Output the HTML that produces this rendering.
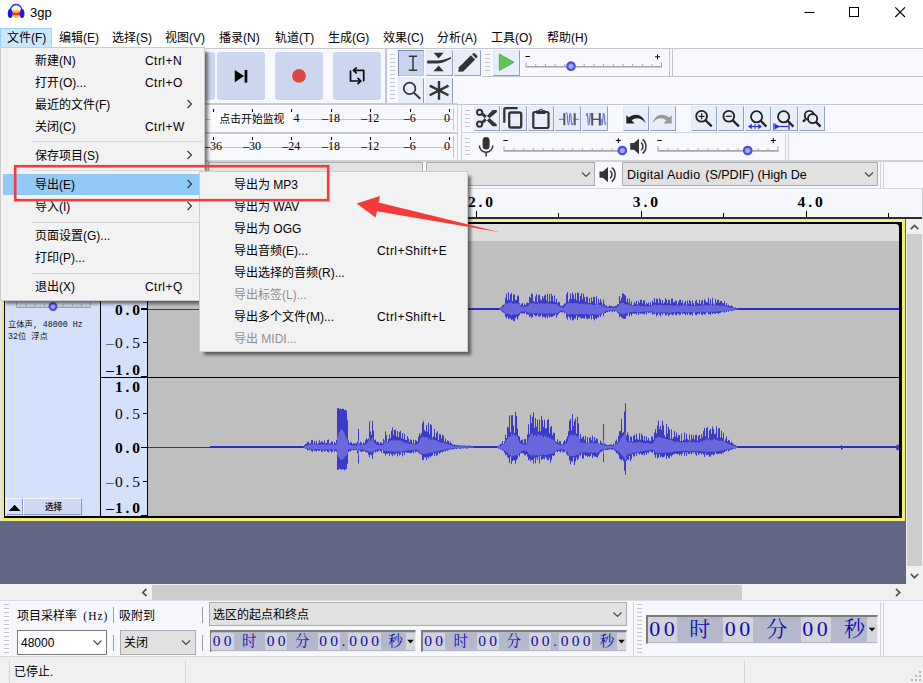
<!DOCTYPE html>
<html lang="zh">
<head>
<meta charset="utf-8">
<title>3gp</title>
<style>
*{box-sizing:border-box;margin:0;padding:0}
html,body{width:923px;height:683px;overflow:hidden;background:#f8f9fe}
body{position:relative;font-family:"Liberation Sans","Noto Sans CJK SC",sans-serif;font-size:12px;color:#000}
#root{position:absolute;left:0;top:0;width:923px;height:683px;overflow:hidden}
#root div,#root span,#root svg{position:absolute}
.t{white-space:nowrap;line-height:1}
.sim{font-family:"Liberation Serif","Noto Serif CJK SC",serif}
.mono{font-family:"Liberation Mono","Noto Sans CJK SC",monospace}
#title{left:0;top:0;width:923px;height:27px;background:#fff}
#menubar{left:0;top:27px;width:923px;height:21px;background:#fff}
#menubar .t{top:5px;font-size:12px}
#tb{left:0;top:48px;width:923px;height:141px;background:#f8f9fe}
.tbtn{background:#ccd6ee;border-radius:3px}
.sbtn{background:#e9eefb;border:1px solid;border-color:#e3e8f7 #939ec2 #939ec2 #e3e8f7}
.sbtn.sel{background:#c7d3ef;border-color:#7d8ab3 #b9c5e6 #b9c5e6 #7d8ab3}
.combo{background:#e1e1e1;border:1px solid #adadad}
.grip{width:5px;background:repeating-linear-gradient(to bottom,#c6c6ca 0,#c6c6ca 1px,transparent 1px,transparent 4px)}
.vsep{width:1px;background:#d0d1d9}
.hsep{height:1px;background:#d4d6e0}
.menu{background:#f2f2f2;border:1px solid #cccccc;box-shadow:4px 4px 3px -1px rgba(0,0,0,.5)}
.menu .t{font-size:12px}
.sepl{height:1px;background:#d7d7d7}
.dis{color:#8f8f8f}
i.c8{font-style:normal;display:inline-block;position:static !important;width:8.7px;text-align:center}
.ml{font-size:12px;letter-spacing:0}
.mi{font-size:12px}
.tc{color:#0c0cb4;text-align:center;font-weight:400}
.vr{font-size:15.5px}
i.dot{font-style:normal;display:inline-block;position:static !important;width:8px;text-align:left}
</style>
</head>
<body>
<div id="root">
<div id="title">
<svg style="left:6px;top:2px" width="20" height="18" viewBox="6 2 20 18">
<defs><linearGradient id="lg1" x1="0" y1="0" x2="0" y2="1"><stop offset="0" stop-color="#fff0b0"/><stop offset="0.25" stop-color="#ffd040"/><stop offset="0.42" stop-color="#ff8a20"/><stop offset="0.5" stop-color="#ff2410"/><stop offset="0.62" stop-color="#ff3a10"/><stop offset="0.72" stop-color="#ffa030"/><stop offset="1" stop-color="#ffe070"/></linearGradient></defs>
<ellipse cx="16.1" cy="13.4" rx="3.9" ry="4.7" fill="url(#lg1)"/>
<path d="M10 11.8 A6.1 7.3 0 0 1 22.2 11.8" fill="none" stroke="#2a2aee" stroke-width="1.3"/>
<ellipse cx="10.2" cy="13.6" rx="2.4" ry="4.5" fill="#1c1ce6"/>
<ellipse cx="22" cy="13.6" rx="2.4" ry="4.5" fill="#1c1ce6"/>
</svg>
<span class="t" style="left:30px;top:6px;font-size:13px">3gp</span>
<svg style="left:800px;top:0" width="123" height="27" viewBox="0 0 123 27">
<path d="M4.5 12.5 H14.5" stroke="#000" stroke-width="1"/>
<rect x="49.5" y="7.5" width="9" height="9" fill="none" stroke="#000" stroke-width="1"/>
<path d="M95.3 7.3 L105 17 M105 7.3 L95.3 17" stroke="#000" stroke-width="1.1"/>
</svg>
</div>
<div id="menubar">
<div style="left:0;top:1px;width:52px;height:20px;background:#cce8ff;border:1px solid #99d1ff"></div>
<span class="t" style="left:7px">文件(F)</span>
<span class="t" style="left:59px">编辑(E)</span>
<span class="t" style="left:112px">选择(S)</span>
<span class="t" style="left:165px">视图(V)</span>
<span class="t" style="left:219px">播录(N)</span>
<span class="t" style="left:275px">轨道(T)</span>
<span class="t" style="left:328px">生成(G)</span>
<span class="t" style="left:383px">效果(C)</span>
<span class="t" style="left:437px">分析(A)</span>
<span class="t" style="left:491px">工具(O)</span>
<span class="t" style="left:547px">帮助(H)</span>
</div>
<div id="tb">
<div style="left:0;top:0;width:923px;height:1px;background:#c6c6cb"></div>
<div class="tbtn" style="left:159px;top:4px;width:56px;height:48px"></div>
<div class="tbtn" style="left:217px;top:4px;width:48px;height:48px"></div>
<div class="tbtn" style="left:275px;top:4px;width:48px;height:48px"></div>
<div class="tbtn" style="left:333px;top:4px;width:48px;height:48px"></div>
<div style="left:385px;top:1px;width:2px;height:55px;background:#c4c5cc"></div>
<div class="grip" style="left:390px;top:6px;height:46px;width:5px"></div>
<div class="sbtn sel" style="left:398px;top:2px;width:26px;height:26px"></div>
<div class="sbtn" style="left:426px;top:2px;width:27px;height:26px"></div>
<div class="sbtn" style="left:454px;top:2px;width:27px;height:26px"></div>
<div class="sbtn" style="left:398px;top:30px;width:26px;height:26px"></div>
<div class="sbtn" style="left:426px;top:30px;width:27px;height:26px"></div>
<div class="grip" style="left:485px;top:6px;height:18px;width:5px"></div>
<div class="sbtn" style="left:493px;top:2px;width:27px;height:26px"></div>
<div style="left:482px;top:28px;width:441px;height:1px;background:#c4c5cb"></div>
<div class="vsep" style="left:669px;top:1px;height:27px;background:#c4c5cb"></div>
<div class="vsep" style="left:672px;top:1px;height:27px;background:#c4c5cb"></div>
<div style="left:0;top:55px;width:457px;height:2px;background:#c9cad2"></div>
<div style="left:457px;top:56px;width:466px;height:1px;background:#c4c5cb"></div>
<div style="left:0;top:71px;width:454px;height:1px;background:#c4c4c8"></div>
<div style="left:0;top:99px;width:454px;height:1px;background:#c4c4c8"></div>
<div style="left:0;top:84px;width:457px;height:2px;background:#c9cad2"></div>
<div class="vsep" style="left:453px;top:60px;height:22px;background:#c4c4c8"></div>
<div class="vsep" style="left:453px;top:88px;height:22px;background:#c4c4c8"></div>
<div class="vsep" style="left:457px;top:57px;height:56px"></div>
<div class="vsep" style="left:461px;top:57px;height:56px"></div>
<div style="left:461px;top:84px;width:462px;height:1px;background:#d3d4dc"></div>
<div style="left:0;top:112px;width:923px;height:2px;background:#d0d1d9"></div>
<div style="left:213.0px;top:61px;width:1px;height:3px;background:#000"></div>
<div style="left:252.1px;top:61px;width:1px;height:3px;background:#000"></div>
<div style="left:291.3px;top:61px;width:1px;height:3px;background:#000"></div>
<div style="left:331.0px;top:61px;width:1px;height:3px;background:#000"></div>
<span class="t sim ml" style="left:322.0px;top:63.8px">–18</span>
<div style="left:370.3px;top:61px;width:1px;height:3px;background:#000"></div>
<span class="t sim ml" style="left:361.3px;top:63.8px">–12</span>
<div style="left:409.7px;top:61px;width:1px;height:3px;background:#000"></div>
<span class="t sim ml" style="left:403.7px;top:63.8px">–6</span>
<div style="left:449.0px;top:61px;width:1px;height:3px;background:#000"></div>
<span class="t sim ml" style="left:443.9px;top:63.8px">0</span>
<div style="left:213.0px;top:89px;width:1px;height:3px;background:#000"></div>
<span class="t sim ml" style="left:204.0px;top:91.69999999999999px">–36</span>
<div style="left:252.1px;top:89px;width:1px;height:3px;background:#000"></div>
<span class="t sim ml" style="left:243.1px;top:91.69999999999999px">–30</span>
<div style="left:291.3px;top:89px;width:1px;height:3px;background:#000"></div>
<span class="t sim ml" style="left:282.3px;top:91.69999999999999px">–24</span>
<div style="left:331.0px;top:89px;width:1px;height:3px;background:#000"></div>
<span class="t sim ml" style="left:322.0px;top:91.69999999999999px">–18</span>
<div style="left:370.3px;top:89px;width:1px;height:3px;background:#000"></div>
<span class="t sim ml" style="left:361.3px;top:91.69999999999999px">–12</span>
<div style="left:409.7px;top:89px;width:1px;height:3px;background:#000"></div>
<span class="t sim ml" style="left:403.7px;top:91.69999999999999px">–6</span>
<div style="left:449.0px;top:89px;width:1px;height:3px;background:#000"></div>
<span class="t sim ml" style="left:443.9px;top:91.69999999999999px">0</span>
<div style="left:211px;top:65px;width:81px;height:13px;background:#fcfdff"></div>
<span class="t" style="left:219.5px;top:66px;font-size:10.8px;font-weight:400;color:#000;font-family:'Liberation Serif','Noto Sans CJK SC',sans-serif">点击开始监视</span>
<span class="t sim ml" style="left:293.6px;top:63.8px">4</span>
<div class="grip" style="left:465px;top:62px;height:18px;width:5px"></div>
<div class="grip" style="left:465px;top:90px;height:18px;width:5px"></div>
<div class="sbtn" style="left:473.5px;top:58px;width:26px;height:25px"></div>
<div class="sbtn" style="left:500.5px;top:58px;width:26px;height:25px"></div>
<div class="sbtn" style="left:527.5px;top:58px;width:26px;height:25px"></div>
<div class="sbtn" style="left:554.5px;top:58px;width:26px;height:25px"></div>
<div class="sbtn" style="left:581.5px;top:58px;width:26px;height:25px"></div>
<div class="sbtn" style="left:622.5px;top:58px;width:26px;height:25px"></div>
<div class="sbtn" style="left:649.5px;top:58px;width:26px;height:25px"></div>
<div class="sbtn" style="left:690.5px;top:58px;width:26px;height:25px"></div>
<div class="sbtn" style="left:717.5px;top:58px;width:26px;height:25px"></div>
<div class="sbtn" style="left:744.5px;top:58px;width:26px;height:25px"></div>
<div class="sbtn" style="left:771.5px;top:58px;width:26px;height:25px"></div>
<div class="sbtn" style="left:798.5px;top:58px;width:26px;height:25px"></div>
<div class="vsep" style="left:785px;top:86px;height:26px"></div>
<div class="vsep" style="left:788px;top:86px;height:26px"></div>
<div class="combo" style="left:208px;top:114px;width:215px;height:24px"></div>
<div class="combo" style="left:426px;top:114px;width:169px;height:24px"></div>
<div class="combo" style="left:622px;top:114px;width:256px;height:24px"></div>
<span class="t" style="left:627px;top:120.6px;font-size:12.5px;letter-spacing:.3px">Digital Audio <span style="position:absolute;left:78.3px;top:0;letter-spacing:0">(S/PDIF) (High De</span></span>
<div class="vsep" style="left:880px;top:114px;height:26px"></div>
<div class="vsep" style="left:883px;top:114px;height:26px"></div>
</div>
<svg style="left:0;top:48px" width="923" height="141" viewBox="0 48 923 141">
<!-- skip end -->
<path d="M234.8 70 L244 76.1 L234.8 82.2Z" fill="#000"/><rect x="244.6" y="70" width="2.7" height="12.6" fill="#000"/>
<!-- record -->
<circle cx="299" cy="75.9" r="6.9" fill="#e04646"/>
<!-- loop -->
<g fill="none" stroke="#0a0a0a" stroke-width="1.7" stroke-linejoin="round" stroke-linecap="round">
<path d="M353.6 70.3 H363.7 V80.6"/><path d="M356.2 67.8 L353.5 70.3 L356.2 72.9"/>
<path d="M350.5 71.2 V81 H360.6"/><path d="M358 78.4 L360.8 81 L358 83.7"/>
</g>
<!-- I-beam -->
<path d="M408.8 56.2 H417.2 M408.8 70.3 H417.2 M413 56.2 V70.3" stroke="#3a3a3a" stroke-width="1.5" fill="none"/>
<!-- envelope -->
<path d="M433.5 52.8 H443.7 L438.6 58.6Z M433.5 71.3 H443.7 L438.6 65.6Z" fill="#333"/>
<path d="M427.2 60.6 H437 C442 60.2 446 59.2 451 57 L451 58.8 C447 61 443 63.2 437.5 63.6 H427.2Z" fill="#333"/>
<!-- pencil -->
<path d="M458.3 71.8 L458.9 67.2 L471 55.2 L475.2 59.4 L463.2 71.4 Z" fill="#333"/>
<path d="M472 54.3 L473 53.4 A1.5 1.5 0 0 1 475 53.4 L477 55.4 A1.5 1.5 0 0 1 477 57.4 L476.1 58.4Z" fill="#333"/>
<!-- magnifier -->
<circle cx="409.6" cy="88.4" r="5.8" fill="none" stroke="#333" stroke-width="1.7"/><path d="M413.8 92.6 L420.3 98.8" stroke="#333" stroke-width="2"/>
<!-- asterisk -->
<path d="M439 81 V99.7 M429.7 85.6 L448.5 95.3 M448.5 85.6 L429.7 95.3" stroke="#333" stroke-width="2.4" fill="none"/>
<!-- play at speed -->
<path d="M499.3 54 L514 62.3 L499.3 70.5Z" fill="#5ec556" stroke="#46a442" stroke-width="0.8"/>
<!-- speed slider -->
<g>
<path d="M525.5 66.7 H662" stroke="#a6a6a6" stroke-width="1.6"/>
<path d="M526 66 V62.5 M535.7 66 V64 M545.4 66 V64 M555.1 66 V64 M564.8 66 V64 M574.5 66 V64 M584.2 66 V64 M593.9 66 V64 M603.6 66 V64 M613.3 66 V64 M623 66 V64 M632.7 66 V64 M642.4 66 V64 M652.1 66 V64 M661.5 66 V62.5" stroke="#a6a6a6" stroke-width="1"/>
<path d="M525.5 56.5 H530" stroke="#000" stroke-width="1"/><path d="M655 56.8 H660 M657.5 54.3 V59.3" stroke="#000" stroke-width="1"/>
<circle cx="571" cy="66.2" r="3.7" fill="#a5a7ee" stroke="#4c50e0" stroke-width="2.3"/>
</g>
<!-- scissors -->
<g fill="none" stroke="#333" stroke-width="2">
<circle cx="479.6" cy="112.3" r="2.6"/><circle cx="479.6" cy="124.1" r="2.6"/>
</g>
<path d="M481 114.4 L483.2 112.8 L496.9 124.4 L496.7 126.3 L492.6 126.3Z M481 122 L483.2 123.6 L496.9 112 L496.7 110.1 L492.6 110.1Z" fill="#333"/>
<!-- copy -->
<g fill="none" stroke="#333" stroke-width="2.3" stroke-linejoin="round">
<rect x="509.2" y="112.5" width="12" height="15" rx="1.6"/>
<path d="M504.3 122.8 V109.8 A1.6 1.6 0 0 1 505.9 108.2 H517.6"/>
</g>
<!-- paste -->
<g fill="none" stroke="#333" stroke-width="2.2" stroke-linejoin="round">
<rect x="533.3" y="112" width="15.2" height="16" rx="1.4"/>
</g>
<path d="M536.4 114 V110.2 H538.9 A2.1 2.1 0 0 1 542.9 110.2 H545.4 V114Z" fill="#333"/>
<circle cx="540.9" cy="110.2" r="0.8" fill="#e9eefb"/>
<!-- trim -->
<g fill="none">
<path d="M559 119.3 H563.5 M573.5 119.3 H578.8" stroke="#5a62e8" stroke-width="1"/>
<path d="M565.6 113.5 C566.4 112 567 112 567.4 116 L567.8 122.5 C568.2 126 568.8 126 569.2 122.5 L569.6 116 C570 112 570.6 112 571 116 L571.4 122.5 C571.8 126 572.4 126 572.8 122.5" stroke="#5a62e8" stroke-width="1"/>
<path d="M564.3 113.2 V125.2 M574.7 113.2 V125.2" stroke="#555" stroke-width="2"/>
</g>
<!-- silence -->
<g fill="none">
<path d="M586.3 116 C586.7 112 587.3 112 587.7 116 L588.1 122.5 C588.5 126 589.1 126 589.5 122.5 L589.9 116 C590.3 112 590.9 112 591.3 116 L591.5 119" stroke="#5a62e8" stroke-width="1"/>
<path d="M601 119 L601.2 122.5 C601.6 126 602.2 126 602.6 122.5 L603 116 C603.4 112 604 112 604.4 116 L604.8 122.5 C605.2 126 605.6 125 605.9 122.5" stroke="#5a62e8" stroke-width="1"/>
<path d="M592.6 119.3 H600" stroke="#444" stroke-width="1.2"/>
<path d="M592.2 113 V125.6 M599.8 113 V125.6" stroke="#555" stroke-width="2"/>
</g>
<!-- undo -->
<path d="M626.3 115.2 L626.3 123.4 L634.6 123.4 L631.6 120.3 C636 116.6 641.5 117.8 645.6 123.2 C643.5 114.8 635 112 628.8 117.6 Z" fill="#222"/>
<!-- redo -->
<path d="M671.7 115.2 L671.7 123.4 L663.4 123.4 L666.4 120.3 C662 116.6 656.5 117.8 652.4 123.2 C654.5 114.8 663 112 669.2 117.6 Z" fill="#999"/>
<!-- zoom in/out/sel/fit/toggle -->
<g fill="none" stroke="#222" stroke-width="1.8">
<circle cx="701.6" cy="116.3" r="5.4"/><path d="M705.5 120.2 L711.7 126.4" stroke-width="2.3"/><path d="M698.6 116.3 H704.6 M701.6 113.3 V119.3" stroke-width="1.3"/>
<circle cx="728.8" cy="116.3" r="5.4"/><path d="M732.7 120.2 L738.9 126.4" stroke-width="2.3"/><path d="M725.8 116.3 H731.8" stroke-width="1.3"/>
<circle cx="756.6" cy="116.8" r="5.6"/><path d="M760.6 120.8 L766.4 126.6" stroke-width="2.3"/>
<circle cx="783.6" cy="116.8" r="5.6"/><path d="M787.6 120.8 L793.4 126.6" stroke-width="2.3"/>
<circle cx="809.4" cy="115.4" r="4.6"/><circle cx="812.6" cy="118.6" r="4.6" fill="#e9eefb"/><path d="M815.9 121.9 L820.6 126.6" stroke-width="2.3"/><path d="M805.4 119.4 L803 121.8" stroke-width="2.3"/>
</g>
<g stroke="#2a32d8" fill="#2a32d8" stroke-width="1">
<path d="M749 126.5 H761" fill="none" stroke-width="1.2"/><path d="M748 126.5 L751.8 123.8 V129.2Z M762 126.5 L758.2 123.8 V129.2Z" stroke="none"/><path d="M755 124 V129" stroke-width="1"/>
<path d="M774.5 126.5 H788.5" fill="none" stroke-width="1.2"/><path d="M774 123.3 V129.7 M789 123.3 V129.7" stroke-width="1.3"/><path d="M775 123.8 L780 126.5 L775 129.2Z" stroke="none"/>
</g>
<!-- mic -->
<rect x="482.6" y="137" width="7" height="12.4" rx="3.5" fill="#333"/>
<path d="M479.4 145.6 A6.7 6.7 0 0 0 492.8 145.6" fill="none" stroke="#333" stroke-width="1.5"/><path d="M486.1 152.2 V156.6" stroke="#333" stroke-width="1.5"/>
<!-- rec slider -->
<g>
<path d="M503.5 150.9 H622" stroke="#a6a6a6" stroke-width="1.6"/>
<path d="M504 150 V146.3 M513.8 150 V148.3 M523.6 150 V148.3 M533.4 150 V148.3 M543.2 150 V148.3 M553 150 V148.3 M562.8 150 V148.3 M572.6 150 V148.3 M582.4 150 V148.3 M592.2 150 V148.3 M602 150 V148.3 M611.8 150 V148.3 M621.6 150 V146.3" stroke="#a6a6a6" stroke-width="1"/>
<path d="M503.4 140.5 H507.8" stroke="#000" stroke-width="1"/><path d="M615.8 140.5 H620.8 M618.3 138 V143" stroke="#000" stroke-width="1"/>
<circle cx="622.3" cy="150.5" r="3.7" fill="#a5a7ee" stroke="#4c50e0" stroke-width="2.3"/>
</g>
<!-- speaker (mixer) -->
<path d="M630.2 143 H634 L639 138.6 V154.2 L634 149.8 H630.2Z" fill="#333"/>
<path d="M641.2 142.6 A5 5 0 0 1 641.2 150.2 M642.6 139.4 A9 9 0 0 1 642.6 153.4" fill="none" stroke="#333" stroke-width="1.5"/>
<!-- play slider -->
<g>
<path d="M657.5 150.9 H778.5" stroke="#a6a6a6" stroke-width="1.6"/>
<path d="M658 150 V146.3 M668 150 V148.3 M678 150 V148.3 M688 150 V148.3 M698 150 V148.3 M708 150 V148.3 M718 150 V148.3 M728 150 V148.3 M738 150 V148.3 M748 150 V148.3 M758 150 V148.3 M768 150 V148.3 M778 150 V146.3" stroke="#a6a6a6" stroke-width="1"/>
<path d="M657.4 140.5 H661.8" stroke="#000" stroke-width="1"/><path d="M770.8 140.5 H775.8 M773.3 138 V143" stroke="#000" stroke-width="1"/>
<circle cx="747.7" cy="150.5" r="3.7" fill="#a5a7ee" stroke="#4c50e0" stroke-width="2.3"/>
</g>
<!-- device toolbar chevrons + speaker -->
<g fill="none" stroke="#444" stroke-width="1.1">
<path d="M582 172.5 L586 176.5 L590 172.5"/><path d="M865 172.5 L869 176.5 L873 172.5"/>
</g>
<path d="M599.5 171.5 H603 L608 167 V182.2 L603 177.7 H599.5Z" fill="#333"/>
<path d="M610.2 170.8 A5 5 0 0 1 610.2 178.4 M611.8 167.6 A9 9 0 0 1 611.8 181.6" fill="none" stroke="#333" stroke-width="1.5"/>
</svg>
<div style="left:0;top:189px;width:923px;height:28px;background:#f7f8fe"></div>
<div style="left:0;top:188px;width:923px;height:1px;background:#d8d9e0"></div>
<div style="left:922px;top:189px;width:1px;height:28px;background:#c9cad2"></div>
<div style="left:146.4px;top:211px;width:1px;height:6px;background:#000"></div>
<span class="t sim" style="left:137.9px;top:194px;font-size:15.5px;font-weight:bold"><i class="c8">0</i><i class="c8">.</i><i class="c8">0</i></span>
<div style="left:228.8px;top:213px;width:1px;height:4px;background:#000"></div>
<div style="left:311.2px;top:211px;width:1px;height:6px;background:#000"></div>
<span class="t sim" style="left:302.7px;top:194px;font-size:15.5px;font-weight:bold"><i class="c8">1</i><i class="c8">.</i><i class="c8">0</i></span>
<div style="left:393.6px;top:213px;width:1px;height:4px;background:#000"></div>
<div style="left:476.0px;top:211px;width:1px;height:6px;background:#000"></div>
<span class="t sim" style="left:467.5px;top:194px;font-size:15.5px;font-weight:bold"><i class="c8">2</i><i class="c8">.</i><i class="c8">0</i></span>
<div style="left:558.4px;top:213px;width:1px;height:4px;background:#000"></div>
<div style="left:640.8px;top:211px;width:1px;height:6px;background:#000"></div>
<span class="t sim" style="left:632.3px;top:194px;font-size:15.5px;font-weight:bold"><i class="c8">3</i><i class="c8">.</i><i class="c8">0</i></span>
<div style="left:723.2px;top:213px;width:1px;height:4px;background:#000"></div>
<div style="left:805.6px;top:211px;width:1px;height:6px;background:#000"></div>
<span class="t sim" style="left:797.1px;top:194px;font-size:15.5px;font-weight:bold"><i class="c8">4</i><i class="c8">.</i><i class="c8">0</i></span>
<div style="left:888.0px;top:213px;width:1px;height:4px;background:#000"></div>
<div style="left:0;top:217px;width:906px;height:2px;background:#111"></div>
<div style="left:0;top:217px;width:906px;height:304px;background:#f3ee78"></div>
<div style="left:0;top:217px;width:1px;height:304px;background:#e8e8e8"></div>
<div style="left:905px;top:219px;width:1px;height:302px;background:#5a5f8c"></div>
<div style="left:4px;top:222px;width:898px;height:296px;background:#000"></div>
<div style="left:5px;top:224px;width:95px;height:292px;background:#d5e1fb"></div>
<div style="left:101px;top:224px;width:46px;height:153px;background:#d5e1fb"></div>
<div style="left:101px;top:378px;width:46px;height:138px;background:#d5e1fb"></div>
<div style="left:148px;top:224px;width:751px;height:153px;background:#bfbfbf;border-top-right-radius:4px"></div>
<div style="left:148px;top:378px;width:751px;height:138px;background:#bfbfbf"></div>
<div style="left:148px;top:224px;width:751px;height:17px;background:#dedede;border-top-right-radius:4px"></div>
<div style="left:0;top:521px;width:906px;height:63px;background:#626685"></div>
<div style="left:906px;top:218px;width:17px;height:366px;background:#f0f0f0"></div>
<div style="left:907px;top:234px;width:15px;height:332px;background:#cdcdcd"></div>
<div style="left:0;top:584px;width:923px;height:17px;background:#f0f0f0"></div>
<div style="left:152px;top:585px;width:590px;height:15px;background:#cdcdcd"></div>
<div style="left:0;top:216.5px;width:922px;height:2px;background:#2b2b33"></div>
<svg style="left:0;top:217px" width="923" height="384" viewBox="0 217 923 384"><g fill="none" stroke="#505050" stroke-width="1.7"><path d="M910.8 229.2 L914.5 225.5 L918.2 229.2"/><path d="M910.8 574 L914.5 577.7 L918.2 574"/><path d="M146.5 588.8 L142.8 592.5 L146.5 596.2"/><path d="M896 588.8 L899.7 592.5 L896 596.2"/></g></svg>
<svg style="left:148px;top:241px" width="751" height="275" viewBox="148 241 751 275" >
<path d="M148 309.5H210M148 447.5H210" stroke="#3030c6" stroke-width="1.15" fill="none"/><path d="M210 309H899M210 447H899" stroke="#2c2cc4" stroke-width="2.2" fill="none"/>
<path d="M499.5 307.9V309.8M500.5 307.5V310.1M501.5 306.9V311.1M502.5 305.2V312.3M503.5 304.8V312.7M504.5 304.6V313.4M505.5 297.7V316.7M506.5 293.5V318.5M507.5 300.0V316.5M508.5 292.2V318.9M509.5 299.8V318.4M510.5 294.3V318.5M511.5 293.1V320.1M512.5 301.0V319.4M513.5 294.3V320.9M514.5 294.5V321.4M515.5 300.2V318.0M516.5 299.8V317.0M517.5 295.7V319.5M518.5 295.5V316.4M519.5 303.3V314.9M520.5 305.0V313.1M521.5 303.7V313.6M522.5 303.1V313.2M523.5 305.8V313.3M524.5 303.6V313.8M525.5 305.3V312.2M526.5 303.3V314.8M527.5 302.4V314.3M528.5 303.1V314.6M529.5 296.7V317.0M530.5 297.8V316.0M531.5 293.3V317.9M532.5 294.4V317.1M533.5 300.7V314.5M534.5 301.9V315.0M535.5 296.5V316.4M536.5 294.1V316.1M537.5 302.1V314.7M538.5 295.1V316.3M539.5 294.6V316.9M540.5 299.4V316.1M541.5 300.4V314.6M542.5 296.0V317.5M543.5 298.4V316.5M544.5 295.6V317.0M545.5 294.6V318.2M546.5 300.2V316.3M547.5 293.8V318.4M548.5 302.1V315.4M549.5 294.1V317.3M550.5 301.2V316.7M551.5 293.8V317.0M552.5 295.9V316.8M553.5 301.5V315.7M554.5 295.4V315.9M555.5 302.0V314.1M556.5 298.8V317.8M557.5 303.2V315.3M558.5 301.5V313.9M559.5 302.3V312.8M560.5 305.4V311.9M561.5 306.1V312.5M562.5 305.8V312.4M563.5 304.9V311.6M564.5 303.6V313.6M565.5 303.1V312.6M566.5 294.3V317.7M567.5 292.1V319.7M568.5 301.5V316.4M569.5 299.4V317.5M570.5 293.6V319.8M571.5 299.0V316.9M572.5 292.4V320.6M573.5 294.7V320.1M574.5 298.9V318.1M575.5 293.1V318.7M576.5 300.2V315.6M577.5 292.6V320.1M578.5 292.9V317.3M579.5 301.3V316.8M580.5 295.9V317.8M581.5 293.2V319.0M582.5 299.2V318.0M583.5 293.7V318.4M584.5 297.0V318.6M585.5 301.6V316.1M586.5 296.7V318.5M587.5 296.9V319.3M588.5 303.2V318.4M589.5 298.3V318.5M590.5 302.8V315.5M591.5 297.4V319.4M592.5 301.3V315.4M593.5 296.7V319.0M594.5 297.0V320.4M595.5 303.8V318.2M596.5 296.2V318.9M597.5 304.1V317.3M598.5 299.0V317.6M599.5 302.7V315.3M600.5 298.9V316.9M601.5 301.8V314.8M602.5 304.9V312.7M603.5 299.7V316.4M604.5 303.7V313.2M605.5 305.6V313.0M606.5 305.7V312.0M607.5 306.5V312.3M608.5 306.4V311.3M609.5 305.5V312.0M610.5 305.9V311.0M611.5 306.2V311.3M612.5 306.5V312.3M613.5 306.4V311.0M614.5 306.5V311.8M615.5 305.8V311.1M616.5 305.9V311.4M617.5 304.2V312.6M618.5 304.2V313.7M619.5 296.0V317.1M620.5 300.6V316.2M621.5 297.9V317.2M622.5 293.4V318.4M623.5 293.6V318.6M624.5 294.6V318.9M625.5 295.3V318.7M626.5 301.8V315.8M627.5 298.4V315.5M628.5 302.6V313.4M629.5 298.6V316.6M630.5 304.4V314.2M631.5 301.5V315.7M632.5 305.3V313.6M633.5 304.6V313.6M634.5 301.9V313.7M635.5 303.6V313.6M636.5 300.8V314.5M637.5 304.6V312.5M638.5 300.8V315.2M639.5 302.9V313.1M640.5 299.8V313.7M641.5 299.9V313.7M642.5 303.4V313.4M643.5 300.3V314.2M644.5 300.3V314.4M645.5 304.8V312.6M646.5 302.6V314.3M647.5 303.7V312.1M648.5 302.3V313.0M649.5 305.1V312.5M650.5 302.2V312.9M651.5 305.3V312.2M652.5 300.4V314.7M653.5 302.5V313.9M654.5 298.0V314.5M655.5 302.6V313.2M656.5 298.7V316.5M657.5 298.8V315.2M658.5 303.2V313.4M659.5 298.2V314.7M660.5 299.6V316.5M661.5 303.2V313.6M662.5 300.0V314.8M663.5 303.6V313.1M664.5 302.3V313.3M665.5 298.2V315.3M666.5 299.7V315.2M667.5 303.2V313.7M668.5 299.5V316.2M669.5 300.3V315.0M670.5 303.7V313.5M671.5 298.5V314.6M672.5 298.5V315.3M673.5 302.3V314.7M674.5 302.2V313.1M675.5 300.6V315.1M676.5 300.8V315.5M677.5 304.6V313.6M678.5 302.2V313.7M679.5 299.9V315.2M680.5 299.7V314.8M681.5 302.8V312.3M682.5 300.5V314.2M683.5 304.5V313.3M684.5 302.5V313.7M685.5 301.0V315.4M686.5 304.6V313.6M687.5 300.5V315.0M688.5 303.6V312.7M689.5 300.1V314.6M690.5 301.2V315.2M691.5 304.7V314.1M692.5 300.5V315.4M693.5 303.1V312.4M694.5 305.3V312.3M695.5 300.9V315.0M696.5 299.8V315.4M697.5 302.9V314.1M698.5 303.7V313.3M699.5 299.9V314.4M700.5 303.9V312.5M701.5 300.9V314.5M702.5 300.0V315.1M703.5 304.6V313.7M704.5 299.3V314.5M705.5 300.6V314.4M706.5 302.4V312.4M707.5 302.2V312.4M708.5 297.7V314.3M709.5 303.7V313.7M710.5 299.3V315.0M711.5 304.5V312.6M712.5 297.7V314.1M713.5 303.4V313.0M714.5 304.7V313.7M715.5 299.1V313.7M716.5 302.6V312.9M717.5 299.9V313.2M718.5 299.8V313.7M719.5 302.6V313.2M720.5 301.2V312.7M721.5 301.1V312.6M722.5 303.0V311.7M723.5 303.4V311.6M724.5 301.4V312.9M725.5 305.5V311.3M726.5 303.0V312.0M727.5 305.5V310.8M728.5 304.7V311.7M729.5 305.9V310.5M730.5 306.1V310.8M731.5 305.3V310.8M732.5 306.3V310.9M733.5 307.4V310.5M734.5 307.6V310.1M735.5 307.5V309.8M736.5 308.0V309.9M737.5 308.4V309.6M738.5 308.3V309.5M303.5 446.3V447.4M304.5 445.1V448.1M305.5 444.0V448.8M306.5 443.6V448.8M307.5 441.8V450.3M308.5 442.0V449.9M309.5 443.7V450.3M310.5 443.3V449.5M311.5 440.1V451.3M312.5 439.9V451.9M313.5 443.7V449.9M314.5 441.0V451.2M315.5 443.5V450.8M316.5 440.8V451.4M317.5 444.1V450.6M318.5 443.0V450.8M319.5 440.2V450.8M320.5 442.5V449.8M321.5 441.4V452.1M322.5 441.5V451.6M323.5 442.9V450.2M324.5 440.4V451.8M325.5 443.3V450.7M326.5 443.2V450.6M327.5 440.0V451.9M328.5 439.5V452.5M329.5 443.8V450.6M330.5 443.0V451.1M331.5 441.2V452.6M332.5 441.7V451.7M333.5 444.4V449.8M334.5 442.0V452.1M335.5 443.2V450.8M336.5 439.8V451.7M337.5 408.1V469.9M338.5 408.1V469.8M339.5 409.1V468.8M340.5 408.6V469.1M341.5 409.3V469.8M342.5 408.7V469.4M343.5 408.9V469.3M344.5 410.1V470.4M345.5 409.6V469.4M346.5 410.7V469.2M347.5 420.3V463.8M348.5 440.4V452.1M349.5 443.1V451.1M350.5 442.4V451.6M351.5 442.3V450.2M352.5 444.1V449.9M353.5 443.3V450.7M354.5 443.3V450.0M355.5 443.6V449.8M356.5 443.4V450.2M357.5 441.7V453.4M358.5 429.0V463.6M359.5 443.8V450.4M360.5 441.7V451.5M361.5 442.4V451.7M362.5 444.5V451.4M363.5 442.3V451.5M364.5 443.0V450.5M365.5 440.4V452.0M366.5 438.3V452.4M367.5 439.3V452.5M368.5 438.6V454.8M369.5 421.4V457.2M370.5 431.6V454.5M371.5 434.7V455.4M372.5 420.8V458.9M373.5 430.5V453.6M374.5 440.2V451.3M375.5 439.5V452.6M376.5 442.2V451.2M377.5 441.6V452.3M378.5 442.1V451.2M379.5 443.9V450.3M380.5 442.1V451.1M381.5 442.6V452.6M382.5 443.6V450.0M383.5 438.7V453.2M384.5 440.5V453.5M385.5 431.4V455.7M386.5 435.3V453.9M387.5 441.9V453.8M388.5 439.0V453.3M389.5 434.5V455.9M390.5 438.3V453.2M391.5 430.7V454.8M392.5 427.4V456.3M393.5 434.8V453.9M394.5 429.9V455.3M395.5 429.7V454.1M396.5 436.5V452.9M397.5 431.0V456.3M398.5 437.1V453.5M399.5 431.8V455.5M400.5 430.6V454.4M401.5 438.2V452.1M402.5 433.1V456.4M403.5 439.0V452.5M404.5 433.8V455.2M405.5 439.9V452.2M406.5 439.6V452.3M407.5 436.2V453.0M408.5 438.4V453.0M409.5 441.7V452.2M410.5 439.4V453.4M411.5 439.9V453.0M412.5 443.3V451.8M413.5 439.7V453.4M414.5 443.8V450.7M415.5 439.9V452.6M416.5 440.7V451.7M417.5 441.5V451.4M418.5 436.8V452.6M419.5 433.1V453.7M420.5 435.1V454.1M421.5 432.9V454.7M422.5 423.2V460.3M423.5 421.1V459.8M424.5 430.0V457.4M425.5 431.4V457.2M426.5 425.2V460.1M427.5 431.6V457.0M428.5 422.7V458.5M429.5 434.3V456.2M430.5 424.1V457.2M431.5 425.0V456.0M432.5 437.6V455.4M433.5 436.3V453.0M434.5 428.9V456.2M435.5 437.4V453.4M436.5 432.9V455.8M437.5 431.4V455.2M438.5 439.8V452.4M439.5 434.1V453.8M440.5 434.2V452.7M441.5 438.5V451.8M442.5 435.0V452.5M443.5 435.5V451.5M444.5 441.5V450.8M445.5 438.5V451.7M446.5 442.3V449.8M447.5 440.4V451.0M448.5 440.9V450.1M449.5 443.3V449.3M450.5 441.8V449.7M451.5 443.4V449.4M452.5 444.5V449.1M453.5 444.8V449.3M454.5 444.4V448.9M455.5 445.1V448.5M456.5 444.9V449.1M457.5 445.4V448.4M458.5 445.2V448.3M459.5 445.3V448.9M460.5 445.7V448.7M461.5 445.3V448.4M462.5 445.7V448.3M463.5 445.5V448.4M464.5 445.5V448.2M465.5 445.9V448.2M466.5 445.6V448.5M467.5 445.8V448.6M468.5 445.7V448.0M469.5 445.6V448.0M470.5 445.7V447.9M471.5 446.0V447.9M472.5 446.2V447.8M473.5 446.4V447.6M497.5 446.1V447.7M498.5 445.8V448.6M499.5 445.0V448.7M500.5 444.1V449.5M501.5 443.8V449.3M502.5 441.1V450.9M503.5 443.9V450.6M504.5 441.5V452.8M505.5 434.8V455.2M506.5 438.0V454.7M507.5 426.6V457.2M508.5 427.7V458.5M509.5 415.3V462.9M510.5 432.2V456.7M511.5 415.3V464.2M512.5 415.0V461.1M513.5 425.6V460.0M514.5 432.9V460.4M515.5 411.8V463.7M516.5 415.9V460.2M517.5 428.5V458.7M518.5 436.1V455.0M519.5 436.5V456.6M520.5 440.7V453.3M521.5 439.8V453.4M522.5 439.5V452.9M523.5 443.0V453.7M524.5 439.1V455.2M525.5 439.2V455.5M526.5 443.3V454.0M527.5 434.5V456.7M528.5 424.3V460.3M529.5 434.2V459.2M530.5 414.8V461.4M531.5 423.1V460.2M532.5 416.7V459.9M533.5 412.2V463.5M534.5 427.9V457.7M535.5 418.0V463.3M536.5 426.7V457.5M537.5 419.5V460.2M538.5 431.7V456.5M539.5 419.7V463.5M540.5 431.3V456.0M541.5 415.9V459.9M542.5 420.2V459.2M543.5 426.9V458.5M544.5 419.8V459.3M545.5 428.7V456.7M546.5 428.0V458.2M547.5 419.9V459.9M548.5 419.2V460.2M549.5 433.4V457.6M550.5 427.0V462.7M551.5 426.1V459.8M552.5 434.9V455.5M553.5 432.7V455.9M554.5 433.0V455.3M555.5 441.1V452.0M556.5 442.1V451.3M557.5 439.4V452.3M558.5 442.7V451.1M559.5 441.1V451.3M560.5 441.1V452.5M561.5 444.2V450.4M562.5 444.4V451.5M563.5 442.1V452.5M564.5 440.1V451.8M565.5 441.5V451.1M566.5 438.6V453.9M567.5 436.2V455.4M568.5 431.2V455.5M569.5 420.7V460.4M570.5 418.8V464.3M571.5 430.2V461.4M572.5 413.9V461.5M573.5 426.0V457.2M574.5 421.1V465.0M575.5 418.5V461.4M576.5 433.6V457.7M577.5 416.9V460.0M578.5 423.4V458.7M579.5 439.2V454.7M580.5 433.9V456.3M581.5 438.7V453.4M582.5 437.3V458.6M583.5 436.1V458.4M584.5 439.5V454.6M585.5 436.0V455.8M586.5 442.6V455.6M587.5 437.3V457.2M588.5 442.7V456.0M589.5 437.8V457.0M590.5 437.4V456.1M591.5 440.2V453.7M592.5 435.5V458.1M593.5 442.0V455.4M594.5 437.0V456.4M595.5 440.4V456.8M596.5 438.2V457.0M597.5 439.1V457.6M598.5 443.1V455.2M599.5 443.9V453.4M600.5 440.6V452.1M601.5 442.3V451.6M602.5 443.5V450.8M603.5 424.1V462.1M604.5 443.3V449.9M605.5 444.2V450.0M606.5 444.5V449.7M607.5 445.0V450.2M608.5 445.2V449.5M609.5 444.6V449.6M610.5 444.3V448.9M611.5 444.5V449.7M612.5 445.1V449.9M613.5 443.4V449.3M614.5 444.7V450.4M615.5 440.9V451.5M616.5 439.6V453.5M617.5 442.1V453.0M618.5 436.1V455.1M619.5 431.3V458.5M620.5 430.7V459.5M621.5 418.7V460.3M622.5 433.0V459.3M623.5 431.9V461.0M624.5 411.5V470.6M625.5 403.2V474.7M626.5 435.4V461.1M627.5 432.3V459.4M628.5 434.8V460.0M629.5 441.4V456.1M630.5 436.6V461.2M631.5 436.7V459.0M632.5 441.5V454.0M633.5 435.9V456.7M634.5 434.8V456.3M635.5 439.6V453.4M636.5 433.9V455.8M637.5 438.8V452.5M638.5 439.9V453.5M639.5 433.3V454.6M640.5 439.7V453.4M641.5 433.5V454.5M642.5 435.3V455.1M643.5 440.3V453.6M644.5 436.0V455.5M645.5 441.0V452.7M646.5 436.3V454.5M647.5 440.3V452.4M648.5 437.9V453.4M649.5 440.8V451.3M650.5 440.8V451.4M651.5 436.9V452.4M652.5 436.3V452.7M653.5 439.6V451.4M654.5 432.5V454.9M655.5 429.1V457.9M656.5 433.4V454.2M657.5 425.5V458.3M658.5 420.6V457.4M659.5 429.2V454.3M660.5 426.1V457.0M661.5 430.0V456.3M662.5 420.7V457.8M663.5 425.3V457.0M664.5 435.1V456.6M665.5 437.1V454.4M666.5 424.1V458.8M667.5 433.6V456.0M668.5 426.8V457.7M669.5 429.5V458.3M670.5 438.7V455.6M671.5 429.4V456.5M672.5 438.9V455.3M673.5 437.1V454.1M674.5 431.0V454.1M675.5 436.5V453.1M676.5 432.3V454.2M677.5 437.6V454.0M678.5 435.2V453.8M679.5 435.2V455.4M680.5 441.0V454.1M681.5 433.5V455.5M682.5 441.2V453.6M683.5 439.9V452.0M684.5 432.5V455.9M685.5 439.5V452.5M686.5 433.6V455.9M687.5 438.9V452.2M688.5 440.2V453.9M689.5 434.6V454.0M690.5 440.6V452.6M691.5 434.8V454.4M692.5 438.6V452.2M693.5 435.1V453.3M694.5 439.5V451.8M695.5 434.9V454.4M696.5 434.7V455.8M697.5 440.7V452.3M698.5 435.8V455.1M699.5 434.9V453.7M700.5 438.8V452.8M701.5 434.0V454.6M702.5 437.4V453.5M703.5 430.9V454.5M704.5 427.9V457.1M705.5 436.2V453.3M706.5 428.2V455.1M707.5 427.1V454.9M708.5 438.5V454.8M709.5 430.4V456.8M710.5 428.7V456.5M711.5 433.9V454.6M712.5 426.5V454.4M713.5 428.9V455.3M714.5 434.1V454.6M715.5 433.4V452.4M716.5 426.4V453.8M717.5 437.7V454.1M718.5 428.4V454.0M719.5 428.3V453.5M720.5 437.4V453.4M721.5 430.9V454.3M722.5 438.0V452.5M723.5 432.7V453.3M724.5 441.2V451.9M725.5 439.1V451.2M726.5 436.6V451.1M727.5 441.3V449.8M728.5 439.8V451.4M729.5 440.4V450.4M730.5 442.9V449.7M731.5 441.7V449.9M732.5 443.0V449.0M733.5 443.9V448.8M734.5 444.9V448.6M735.5 445.1V448.5M736.5 445.8V448.1M737.5 446.4V447.8" stroke="#3a3acb" stroke-width="1" fill="none"/>
<path d="M499.5 308.7V309.4M500.5 308.3V309.8M501.5 308.0V310.2M502.5 307.1V310.9M503.5 306.7V311.3M504.5 305.1V312.6M505.5 304.0V313.3M506.5 303.6V313.5M507.5 303.3V313.8M508.5 302.7V314.4M509.5 303.0V314.4M510.5 302.5V315.0M511.5 302.4V315.4M512.5 303.6V314.6M513.5 303.6V314.5M514.5 303.8V314.3M515.5 302.9V314.9M516.5 303.4V314.5M517.5 303.2V314.5M518.5 303.8V313.9M519.5 304.6V313.2M520.5 305.9V312.1M521.5 306.8V311.4M522.5 306.8V311.4M523.5 306.8V311.5M524.5 306.7V311.7M525.5 307.0V311.5M526.5 306.4V312.0M527.5 306.0V312.4M528.5 305.3V312.6M529.5 303.5V313.4M530.5 303.0V313.6M531.5 303.7V313.2M532.5 303.2V313.5M533.5 302.6V313.9M534.5 303.9V313.2M535.5 303.9V313.2M536.5 303.8V313.3M537.5 303.6V313.4M538.5 302.9V313.8M539.5 303.9V313.3M540.5 303.4V313.5M541.5 302.8V313.9M542.5 304.0V313.2M543.5 303.1V313.7M544.5 303.8V313.3M545.5 303.7V313.4M546.5 303.2V313.8M547.5 303.3V313.7M548.5 303.3V313.7M549.5 304.0V313.3M550.5 303.1V313.9M551.5 304.1V313.3M552.5 303.9V313.5M553.5 303.7V313.6M554.5 304.3V313.2M555.5 304.0V313.4M556.5 304.3V313.3M557.5 304.8V312.9M558.5 306.1V311.9M559.5 306.4V311.5M560.5 307.2V310.9M561.5 307.3V310.8M562.5 307.7V310.6M563.5 307.6V310.7M564.5 307.0V311.2M565.5 305.5V312.3M566.5 303.5V313.7M567.5 303.5V313.8M568.5 302.5V314.5M569.5 303.5V314.0M570.5 302.9V314.5M571.5 303.0V314.5M572.5 303.6V314.1M573.5 303.0V314.5M574.5 303.2V314.4M575.5 303.1V314.4M576.5 303.2V314.3M577.5 302.7V314.6M578.5 303.8V313.8M579.5 303.5V314.0M580.5 303.9V313.8M581.5 303.7V314.0M582.5 304.0V314.0M583.5 303.8V314.3M584.5 303.8V314.4M585.5 304.4V314.0M586.5 304.1V314.4M587.5 304.4V314.3M588.5 304.5V314.3M589.5 303.8V315.0M590.5 304.4V314.5M591.5 304.3V314.6M592.5 304.9V314.1M593.5 304.9V314.2M594.5 305.0V314.2M595.5 304.6V314.5M596.5 304.2V314.9M597.5 304.3V314.8M598.5 304.4V314.6M599.5 305.0V314.1M600.5 305.0V313.9M601.5 305.8V312.8M602.5 306.4V311.9M603.5 305.5V312.8M604.5 306.4V312.1M605.5 307.4V311.0M606.5 307.7V310.7M607.5 307.5V310.9M608.5 307.6V310.8M609.5 307.8V310.5M610.5 307.9V310.4M611.5 307.7V310.6M612.5 307.9V310.5M613.5 307.8V310.5M614.5 307.9V310.5M615.5 307.7V310.6M616.5 307.8V310.6M617.5 307.0V311.5M618.5 305.8V312.2M619.5 304.3V313.0M620.5 303.3V313.5M621.5 303.0V313.7M622.5 302.5V314.4M623.5 303.0V314.4M624.5 303.8V314.1M625.5 304.7V313.3M626.5 304.5V313.4M627.5 304.4V313.5M628.5 304.9V313.1M629.5 305.5V312.5M630.5 305.5V312.4M631.5 305.9V312.0M632.5 306.0V311.9M633.5 305.6V312.1M634.5 306.0V311.9M635.5 305.9V311.9M636.5 306.1V311.8M637.5 305.8V312.0M638.5 305.4V312.3M639.5 305.5V312.3M640.5 306.1V311.8M641.5 305.6V312.1M642.5 306.1V311.7M643.5 306.3V311.6M644.5 306.1V311.7M645.5 306.3V311.5M646.5 305.9V311.8M647.5 306.5V311.3M648.5 306.3V311.5M649.5 306.3V311.4M650.5 306.1V311.6M651.5 306.2V311.5M652.5 305.9V311.7M653.5 304.9V312.5M654.5 304.8V312.7M655.5 304.6V312.8M656.5 304.9V312.6M657.5 305.2V312.4M658.5 305.0V312.5M659.5 304.9V312.6M660.5 305.0V312.5M661.5 304.8V312.7M662.5 305.5V312.3M663.5 305.4V312.4M664.5 305.6V312.2M665.5 305.0V312.7M666.5 305.6V312.3M667.5 305.1V312.7M668.5 305.0V312.8M669.5 305.5V312.5M670.5 305.1V312.7M671.5 305.5V312.4M672.5 305.8V312.2M673.5 305.4V312.4M674.5 305.7V312.1M675.5 305.2V312.4M676.5 305.8V311.9M677.5 305.8V311.9M678.5 305.4V312.1M679.5 305.7V311.8M680.5 305.5V312.0M681.5 305.4V312.1M682.5 305.2V312.2M683.5 305.5V312.1M684.5 305.7V311.9M685.5 305.5V312.1M686.5 305.3V312.3M687.5 305.5V312.2M688.5 305.5V312.2M689.5 306.0V311.9M690.5 306.0V311.9M691.5 306.1V311.8M692.5 305.8V312.0M693.5 305.7V312.1M694.5 305.7V312.1M695.5 306.0V311.9M696.5 305.6V312.2M697.5 305.9V311.9M698.5 305.8V312.0M699.5 305.7V312.0M700.5 305.9V311.8M701.5 305.1V312.2M702.5 305.5V311.9M703.5 305.6V311.9M704.5 305.4V311.9M705.5 304.9V312.2M706.5 305.6V311.8M707.5 305.4V311.9M708.5 305.3V311.9M709.5 305.2V311.9M710.5 304.9V312.1M711.5 305.1V311.9M712.5 305.3V311.8M713.5 304.8V312.0M714.5 305.4V311.7M715.5 305.4V311.6M716.5 305.3V311.6M717.5 305.4V311.5M718.5 305.7V311.3M719.5 305.7V311.3M720.5 305.6V311.3M721.5 305.7V311.2M722.5 305.7V311.2M723.5 305.9V311.0M724.5 306.2V310.9M725.5 306.4V310.8M726.5 306.3V310.9M727.5 306.9V310.6M728.5 307.0V310.5M729.5 307.4V310.3M730.5 307.3V310.3M731.5 307.6V310.1M732.5 307.9V310.0M733.5 308.1V309.9M734.5 308.4V309.7M735.5 308.5V309.6M736.5 308.6V309.4M737.5 308.7V309.3M738.5 308.8V309.3M303.5 446.8V447.2M304.5 446.3V447.7M305.5 445.9V448.0M306.5 445.4V448.4M307.5 445.2V448.7M308.5 444.7V449.0M309.5 444.8V449.0M310.5 444.8V448.9M311.5 444.1V449.4M312.5 444.2V449.4M313.5 444.3V449.3M314.5 444.2V449.4M315.5 444.7V449.1M316.5 444.4V449.4M317.5 444.4V449.4M318.5 444.5V449.3M319.5 444.8V449.2M320.5 444.7V449.3M321.5 444.4V449.5M322.5 444.4V449.5M323.5 444.6V449.4M324.5 444.6V449.4M325.5 444.5V449.5M326.5 444.7V449.4M327.5 444.5V449.5M328.5 444.4V449.6M329.5 444.4V449.7M330.5 444.6V449.5M331.5 444.6V449.5M332.5 444.7V449.5M333.5 444.7V449.5M334.5 444.9V449.3M335.5 444.9V449.3M336.5 444.4V449.7M337.5 437.2V455.4M338.5 434.4V457.0M339.5 432.0V458.4M340.5 430.3V459.4M341.5 429.5V459.8M342.5 429.8V459.5M343.5 431.2V458.8M344.5 433.5V457.6M345.5 436.3V456.1M346.5 437.7V455.4M347.5 440.2V453.3M348.5 444.4V449.7M349.5 444.8V449.5M350.5 445.1V449.4M351.5 445.4V449.2M352.5 445.4V449.1M353.5 445.5V449.1M354.5 445.5V449.1M355.5 445.4V449.1M356.5 445.8V448.7M357.5 444.1V450.9M358.5 440.4V455.7M359.5 444.9V449.4M360.5 445.1V449.3M361.5 445.0V449.5M362.5 445.1V449.4M363.5 444.9V449.8M364.5 444.8V449.8M365.5 444.0V450.4M366.5 443.6V450.7M367.5 442.3V451.1M368.5 440.7V451.3M369.5 437.3V452.4M370.5 441.3V451.5M371.5 438.8V452.4M372.5 437.0V452.9M373.5 441.5V451.1M374.5 443.5V450.3M375.5 443.7V450.2M376.5 444.3V449.9M377.5 445.0V449.5M378.5 445.2V449.4M379.5 445.2V449.5M380.5 445.3V449.3M381.5 445.1V449.6M382.5 445.2V449.5M383.5 444.3V449.9M384.5 441.9V450.8M385.5 440.9V451.3M386.5 442.4V450.9M387.5 442.3V451.4M388.5 442.7V451.1M389.5 441.4V451.5M390.5 441.4V451.1M391.5 439.9V451.8M392.5 440.0V451.7M393.5 441.0V451.2M394.5 439.8V451.8M395.5 440.1V451.7M396.5 440.4V451.5M397.5 441.1V451.2M398.5 440.0V451.8M399.5 440.7V451.5M400.5 440.3V451.8M401.5 441.0V451.5M402.5 441.5V451.4M403.5 442.1V451.1M404.5 442.5V451.0M405.5 442.9V450.8M406.5 443.1V450.7M407.5 443.3V450.6M408.5 443.8V450.2M409.5 444.0V450.1M410.5 443.9V450.2M411.5 444.0V450.2M412.5 444.0V450.2M413.5 444.2V450.1M414.5 444.6V449.7M415.5 444.8V449.6M416.5 444.6V449.7M417.5 444.0V450.0M418.5 443.5V450.3M419.5 441.1V451.6M420.5 437.9V453.2M421.5 437.2V453.6M422.5 436.6V454.1M423.5 437.2V453.9M424.5 437.1V454.0M425.5 437.7V453.8M426.5 437.0V454.1M427.5 437.9V453.6M428.5 439.4V452.7M429.5 438.0V453.5M430.5 439.9V452.4M431.5 439.8V452.4M432.5 438.9V452.8M433.5 439.9V452.2M434.5 440.2V452.1M435.5 440.0V452.1M436.5 441.2V451.4M437.5 441.1V451.4M438.5 442.2V450.7M439.5 441.6V450.9M440.5 442.4V450.4M441.5 442.7V450.2M442.5 443.0V449.9M443.5 442.7V450.0M444.5 443.5V449.5M445.5 443.3V449.5M446.5 443.8V449.2M447.5 444.2V448.9M448.5 444.6V448.7M449.5 444.6V448.8M450.5 445.1V448.6M451.5 445.4V448.5M452.5 445.7V448.3M453.5 445.9V448.2M454.5 445.9V448.2M455.5 446.1V448.1M456.5 446.2V448.0M457.5 446.2V448.0M458.5 446.3V448.0M459.5 446.3V447.9M460.5 446.4V447.9M461.5 446.3V447.9M462.5 446.4V447.8M463.5 446.3V447.9M464.5 446.5V447.7M465.5 446.4V447.8M466.5 446.5V447.7M467.5 446.5V447.7M468.5 446.5V447.7M469.5 446.5V447.7M470.5 446.6V447.6M471.5 446.5V447.6M472.5 446.6V447.5M473.5 446.7V447.4M497.5 446.7V447.5M498.5 446.4V447.8M499.5 446.1V448.1M500.5 445.7V448.6M501.5 445.1V449.2M502.5 444.8V449.4M503.5 444.0V450.2M504.5 443.7V450.5M505.5 442.3V451.2M506.5 440.1V452.0M507.5 439.0V452.7M508.5 436.9V454.4M509.5 436.3V455.1M510.5 436.6V455.0M511.5 433.8V456.7M512.5 435.9V455.5M513.5 433.7V456.6M514.5 434.7V455.9M515.5 436.0V455.0M516.5 435.1V455.3M517.5 437.1V454.7M518.5 439.7V454.5M519.5 442.6V453.0M520.5 443.1V452.3M521.5 443.7V451.3M522.5 444.2V450.9M523.5 444.4V450.8M524.5 444.6V450.8M525.5 444.2V451.4M526.5 444.5V451.2M527.5 443.0V451.9M528.5 439.2V453.6M529.5 437.0V454.4M530.5 435.3V454.9M531.5 434.0V455.4M532.5 433.1V456.0M533.5 436.2V454.6M534.5 435.2V455.2M535.5 435.0V455.4M536.5 436.8V454.5M537.5 434.4V455.7M538.5 434.6V455.6M539.5 434.9V455.4M540.5 435.6V454.9M541.5 435.2V455.2M542.5 436.3V454.7M543.5 437.4V454.2M544.5 435.5V455.2M545.5 436.2V454.9M546.5 436.6V454.8M547.5 437.5V454.4M548.5 436.9V454.8M549.5 438.3V454.0M550.5 438.3V454.1M551.5 439.4V453.5M552.5 439.4V453.5M553.5 439.8V453.2M554.5 441.1V452.4M555.5 442.6V451.3M556.5 443.5V450.7M557.5 444.3V450.2M558.5 444.4V450.2M559.5 444.9V449.8M560.5 445.2V449.6M561.5 445.2V449.6M562.5 445.0V449.7M563.5 445.1V449.6M564.5 444.6V450.1M565.5 443.7V450.9M566.5 443.0V451.5M567.5 441.5V452.3M568.5 438.2V454.1M569.5 436.1V455.3M570.5 434.8V456.1M571.5 434.9V456.0M572.5 434.4V456.3M573.5 435.7V455.6M574.5 434.7V456.0M575.5 434.9V455.7M576.5 436.4V454.9M577.5 436.2V454.8M578.5 437.8V454.1M579.5 440.2V453.5M580.5 442.8V452.1M581.5 442.0V453.0M582.5 442.5V452.7M583.5 443.2V452.2M584.5 443.2V452.3M585.5 443.4V452.3M586.5 443.4V452.3M587.5 443.2V452.5M588.5 443.1V452.5M589.5 442.7V452.9M590.5 442.7V452.8M591.5 443.3V452.1M592.5 442.7V452.8M593.5 442.9V452.8M594.5 443.6V452.3M595.5 443.3V452.8M596.5 443.3V453.0M597.5 443.3V453.2M598.5 444.0V452.1M599.5 444.2V451.2M600.5 444.5V450.1M601.5 444.8V449.4M602.5 444.9V449.3M603.5 439.9V453.9M604.5 445.3V449.3M605.5 445.7V448.8M606.5 445.7V448.7M607.5 445.8V448.6M608.5 446.0V448.4M609.5 446.1V448.3M610.5 446.1V448.3M611.5 446.1V448.3M612.5 446.0V448.4M613.5 445.7V448.6M614.5 444.9V449.2M615.5 444.4V449.7M616.5 443.9V450.2M617.5 443.4V450.8M618.5 442.7V451.7M619.5 442.0V452.1M620.5 438.8V454.0M621.5 437.5V455.1M622.5 436.7V456.0M623.5 435.6V457.1M624.5 433.7V458.8M625.5 431.5V461.1M626.5 440.5V456.6M627.5 442.2V454.5M628.5 441.8V454.8M629.5 442.7V453.5M630.5 441.9V454.1M631.5 442.0V453.8M632.5 442.7V452.8M633.5 442.8V452.4M634.5 442.6V452.4M635.5 442.3V452.5M636.5 442.5V452.1M637.5 442.6V451.8M638.5 442.2V451.9M639.5 441.8V452.0M640.5 442.5V451.4M641.5 442.1V451.6M642.5 442.7V451.1M643.5 442.8V451.0M644.5 442.6V451.0M645.5 443.2V450.5M646.5 442.7V450.8M647.5 442.9V450.6M648.5 443.1V450.4M649.5 443.7V449.9M650.5 443.4V450.0M651.5 443.6V449.8M652.5 443.4V449.9M653.5 442.7V450.4M654.5 441.0V451.3M655.5 438.0V452.9M656.5 438.2V452.8M657.5 437.5V453.1M658.5 436.6V453.5M659.5 437.7V452.9M660.5 436.7V453.4M661.5 437.7V452.9M662.5 438.0V452.8M663.5 438.1V452.8M664.5 438.1V452.8M665.5 438.9V452.5M666.5 439.0V452.5M667.5 439.1V452.5M668.5 440.3V452.0M669.5 439.3V452.5M670.5 439.8V452.3M671.5 439.9V452.4M672.5 440.8V451.9M673.5 441.1V451.7M674.5 441.8V451.3M675.5 441.9V451.2M676.5 441.6V451.4M677.5 441.8V451.2M678.5 441.8V451.2M679.5 442.4V450.9M680.5 441.9V451.1M681.5 442.4V450.8M682.5 442.1V451.0M683.5 442.2V451.0M684.5 442.4V450.8M685.5 442.4V450.8M686.5 442.0V451.1M687.5 442.5V450.8M688.5 441.6V451.4M689.5 441.6V451.4M690.5 441.8V451.3M691.5 441.9V451.3M692.5 442.5V450.9M693.5 441.8V451.4M694.5 442.2V451.2M695.5 442.7V450.8M696.5 442.0V451.2M697.5 442.3V451.0M698.5 442.2V451.0M699.5 442.3V450.9M700.5 441.4V451.4M701.5 441.1V451.5M702.5 441.3V451.3M703.5 440.2V451.8M704.5 440.3V451.7M705.5 440.6V451.6M706.5 439.3V452.2M707.5 439.0V452.3M708.5 440.1V451.7M709.5 439.2V452.1M710.5 440.2V451.5M711.5 440.1V451.5M712.5 439.9V451.5M713.5 438.8V452.0M714.5 438.9V451.8M715.5 439.9V451.4M716.5 439.5V451.6M717.5 440.2V451.2M718.5 440.7V451.0M719.5 440.9V450.8M720.5 440.9V450.8M721.5 440.2V451.1M722.5 441.6V450.4M723.5 441.1V450.6M724.5 442.0V450.2M725.5 442.5V450.0M726.5 443.3V449.6M727.5 443.5V449.5M728.5 443.9V449.3M729.5 444.2V449.1M730.5 444.7V448.8M731.5 445.2V448.5M732.5 445.4V448.4M733.5 445.5V448.3M734.5 445.9V448.1M735.5 446.3V447.9M736.5 446.4V447.8M737.5 446.7V447.4" stroke="#6868dc" stroke-width="1" fill="none"/>
<path d="M841.5 444.8V450M842.5 446V449M896.5 445.5V449.5M897.5 444.5V450.5M898.5 445V450" stroke="#3a3acb" stroke-width="1" fill="none"/>
</svg>
<span class="t sim vr" style="right:782.5px;top:225px;font-weight:bold"><i class="c8">1</i><i class="c8">.</i><i class="c8">0</i></span>
<span class="t sim vr" style="right:782.5px;top:268px;font-weight:normal"><i class="c8">0</i><i class="c8">.</i><i class="c8">5</i></span>
<span class="t sim vr" style="right:782.5px;top:302px;font-weight:bold"><i class="c8">0</i><i class="c8">.</i><i class="c8">0</i></span>
<span class="t sim vr" style="right:782.5px;top:335px;font-weight:normal"><i class="c8">–</i><i class="c8">0</i><i class="c8">.</i><i class="c8">5</i></span>
<span class="t sim vr" style="right:782.5px;top:362px;font-weight:bold"><i class="c8">–</i><i class="c8">1</i><i class="c8">.</i><i class="c8">0</i></span>
<span class="t sim vr" style="right:782.5px;top:379px;font-weight:bold"><i class="c8">1</i><i class="c8">.</i><i class="c8">0</i></span>
<span class="t sim vr" style="right:782.5px;top:406px;font-weight:normal"><i class="c8">0</i><i class="c8">.</i><i class="c8">5</i></span>
<span class="t sim vr" style="right:782.5px;top:440px;font-weight:bold"><i class="c8">0</i><i class="c8">.</i><i class="c8">0</i></span>
<span class="t sim vr" style="right:782.5px;top:474px;font-weight:normal"><i class="c8">–</i><i class="c8">0</i><i class="c8">.</i><i class="c8">5</i></span>
<span class="t sim vr" style="right:782.5px;top:500px;font-weight:bold"><i class="c8">–</i><i class="c8">1</i><i class="c8">.</i><i class="c8">0</i></span>
<div style="left:141px;top:308px;width:6px;height:2px;background:#000"></div>
<div style="left:141px;top:447px;width:6px;height:1px;background:#000"></div>
<div style="left:143px;top:342px;width:4px;height:1px;background:#000"></div>
<div style="left:143px;top:481px;width:4px;height:1px;background:#000"></div>
<div style="left:143px;top:413px;width:4px;height:1px;background:#000"></div>
<div style="left:143px;top:275px;width:4px;height:1px;background:#000"></div>
<div style="left:141px;top:376px;width:6px;height:1px;background:#000"></div>
<div style="left:141px;top:515px;width:6px;height:1px;background:#000"></div>
<svg style="left:5px;top:224px" width="95" height="292" viewBox="5 224 95 292"><path d="M16 307.2 H91" stroke="#a6a6a6" stroke-width="1.5"/><path d="M16.5 306 V302.5 M25.8 306 V304 M35.1 306 V304 M44.4 306 V304 M53.7 306 V304 M63 306 V304 M72.3 306 V304 M81.6 306 V304 M90.5 306 V302.5" stroke="#a6a6a6" stroke-width="1"/><circle cx="53" cy="306.5" r="3.4" fill="#a5a7ee" stroke="#4c50e0" stroke-width="2.2"/><path d="M8.7 511 L14.6 504.8 L20.5 511Z" fill="#000"/></svg>
<span class="t mono" style="left:8px;top:321px;font-size:8.3px;letter-spacing:0;font-weight:normal;color:#111">立体声, 48000 Hz</span>
<span class="t mono" style="left:8px;top:333px;font-size:8.3px;letter-spacing:0;font-weight:normal;color:#111">32位 浮点</span>
<div style="left:6px;top:498px;width:17px;height:17px;border:1px solid;border-color:#f4f7ff #8f9abe #8f9abe #f4f7ff"></div>
<div style="left:23px;top:498px;width:59px;height:17px;background:#cdd9f3;border:1px solid;border-color:#f4f7ff #8f9abe #8f9abe #f4f7ff"></div>
<span class="t mono" style="left:45px;top:503.5px;font-size:8.6px;font-weight:bold;color:#223">选择</span>
<div style="left:0;top:600px;width:923px;height:1px;background:#dadbe2"></div>
<div style="left:0;top:601px;width:923px;height:56px;background:#f7f8fe"></div>
<div style="left:0;top:656px;width:923px;height:1px;background:#d6d7de"></div>
<div style="left:0;top:657px;width:923px;height:26px;background:#f0f0f0"></div>
<div class="grip" style="left:4px;top:604px;height:49px;width:5px"></div>
<span class="t" style="left:17px;top:610px;font-size:12px">项目采样率 <span class="sim" style="position:static !important;font-size:11.5px;letter-spacing:1px;margin-left:3px">(Hz)</span></span>
<div class="vsep" style="left:113px;top:607px;height:16px;background:#a0a0a0"></div>
<span class="t" style="left:119px;top:610px;font-size:12px">吸附到</span>
<div style="left:17px;top:630px;width:90px;height:25px;background:#fff;border:1px solid #7a7a7a"></div>
<span class="t" style="left:21px;top:637px;font-size:12px">48000</span>
<div class="vsep" style="left:113px;top:635px;height:16px;background:#a0a0a0"></div>
<div class="combo" style="left:120px;top:630px;width:76px;height:25px"></div>
<span class="t" style="left:124px;top:637px;font-size:12px">关闭</span>
<div class="vsep" style="left:202px;top:607px;height:16px;background:#a0a0a0"></div>
<div class="vsep" style="left:202px;top:635px;height:16px;background:#a0a0a0"></div>
<div class="combo" style="left:209px;top:602px;width:418px;height:24px"></div>
<span class="t" style="left:213px;top:609px;font-size:12px">选区的起点和终点</span>
<div style="left:209.5px;top:630px;width:206px;height:22px;background:#b4b8ca;border:1px solid;border-width:2px 1px 1px 2px;border-color:#7c7c7c #ececec #ececec #7c7c7c"></div>
<div style="left:211.0px;top:633px;width:22.5px;height:17px;background:#d3d4da"></div>
<span class="t sim tc" style="left:211.0px;top:633.2px;width:11px;font-size:15.5px">0</span>
<span class="t sim tc" style="left:222.0px;top:633.2px;width:11px;font-size:15.5px">0</span>
<span class="t sim tc" style="left:233.5px;top:633.8px;width:31.5px;font-size:14.5px">时</span>
<div style="left:265.0px;top:633px;width:22.0px;height:17px;background:#d3d4da"></div>
<span class="t sim tc" style="left:265.0px;top:633.2px;width:11px;font-size:15.5px">0</span>
<span class="t sim tc" style="left:276.0px;top:633.2px;width:11px;font-size:15.5px">0</span>
<span class="t sim tc" style="left:287.0px;top:633.8px;width:30.5px;font-size:14.5px">分</span>
<div style="left:317.5px;top:633px;width:22.0px;height:17px;background:#d3d4da"></div>
<span class="t sim tc" style="left:317.5px;top:633.2px;width:11px;font-size:15.5px">0</span>
<span class="t sim tc" style="left:328.5px;top:633.2px;width:11px;font-size:15.5px">0</span>
<span class="t sim tc" style="left:339.5px;top:633.8px;width:8.0px;font-size:14.5px">.</span>
<div style="left:347.5px;top:633px;width:33.0px;height:17px;background:#d3d4da"></div>
<span class="t sim tc" style="left:347.5px;top:633.2px;width:11px;font-size:15.5px">0</span>
<span class="t sim tc" style="left:358.5px;top:633.2px;width:11px;font-size:15.5px">0</span>
<span class="t sim tc" style="left:369.5px;top:633.2px;width:11px;font-size:15.5px">0</span>
<span class="t sim tc" style="left:380.5px;top:633.8px;width:25.0px;font-size:14.5px;padding-left:5px">秒</span>
<div style="left:405.5px;top:633px;width:9px;height:17px;background:#d6d7dc"></div>
<svg style="left:405.5px;top:631px" width="9" height="21"><path d="M1.2 8.7 H7.8 L4.5 12.5Z" fill="#000"/></svg>
<div style="left:421px;top:630px;width:206px;height:22px;background:#b4b8ca;border:1px solid;border-width:2px 1px 1px 2px;border-color:#7c7c7c #ececec #ececec #7c7c7c"></div>
<div style="left:422.5px;top:633px;width:22.5px;height:17px;background:#d3d4da"></div>
<span class="t sim tc" style="left:422.5px;top:633.2px;width:11px;font-size:15.5px">0</span>
<span class="t sim tc" style="left:433.5px;top:633.2px;width:11px;font-size:15.5px">0</span>
<span class="t sim tc" style="left:445.0px;top:633.8px;width:31.5px;font-size:14.5px">时</span>
<div style="left:476.5px;top:633px;width:22.0px;height:17px;background:#d3d4da"></div>
<span class="t sim tc" style="left:476.5px;top:633.2px;width:11px;font-size:15.5px">0</span>
<span class="t sim tc" style="left:487.5px;top:633.2px;width:11px;font-size:15.5px">0</span>
<span class="t sim tc" style="left:498.5px;top:633.8px;width:30.5px;font-size:14.5px">分</span>
<div style="left:529.0px;top:633px;width:22.0px;height:17px;background:#d3d4da"></div>
<span class="t sim tc" style="left:529.0px;top:633.2px;width:11px;font-size:15.5px">0</span>
<span class="t sim tc" style="left:540.0px;top:633.2px;width:11px;font-size:15.5px">0</span>
<span class="t sim tc" style="left:551.0px;top:633.8px;width:8.0px;font-size:14.5px">.</span>
<div style="left:559.0px;top:633px;width:33.0px;height:17px;background:#d3d4da"></div>
<span class="t sim tc" style="left:559.0px;top:633.2px;width:11px;font-size:15.5px">0</span>
<span class="t sim tc" style="left:570.0px;top:633.2px;width:11px;font-size:15.5px">0</span>
<span class="t sim tc" style="left:581.0px;top:633.2px;width:11px;font-size:15.5px">0</span>
<span class="t sim tc" style="left:592.0px;top:633.8px;width:25.0px;font-size:14.5px;padding-left:5px">秒</span>
<div style="left:617.0px;top:633px;width:9px;height:17px;background:#d6d7dc"></div>
<svg style="left:617.0px;top:631px" width="9" height="21"><path d="M1.2 8.7 H7.8 L4.5 12.5Z" fill="#000"/></svg>
<div class="vsep" style="left:633px;top:602px;height:54px"></div>
<div class="grip" style="left:637px;top:604px;height:49px;width:5px"></div>
<div style="left:646px;top:615px;width:232.0px;height:29px;background:#b4b8ca;border:1px solid;border-width:2px 1px 1px 2px;border-color:#7c7c7c #ececec #ececec #7c7c7c"></div>
<div style="left:647.5px;top:617px;width:29.0px;height:25px;background:#d3d4da"></div>
<span class="t sim tc" style="left:647.5px;top:618.0px;width:14.5px;font-size:22px">0</span>
<span class="t sim tc" style="left:662.0px;top:618.0px;width:14.5px;font-size:22px">0</span>
<span class="t sim tc" style="left:676.5px;top:618.5px;width:46.5px;font-size:21px">时</span>
<div style="left:723.0px;top:617px;width:30.0px;height:25px;background:#d3d4da"></div>
<span class="t sim tc" style="left:723.0px;top:618.0px;width:14.5px;font-size:22px">0</span>
<span class="t sim tc" style="left:737.5px;top:618.0px;width:14.5px;font-size:22px">0</span>
<span class="t sim tc" style="left:753.0px;top:618.5px;width:47.5px;font-size:21px">分</span>
<div style="left:800.5px;top:617px;width:30.0px;height:25px;background:#d3d4da"></div>
<span class="t sim tc" style="left:800.5px;top:618.0px;width:14.5px;font-size:22px">0</span>
<span class="t sim tc" style="left:815.0px;top:618.0px;width:14.5px;font-size:22px">0</span>
<span class="t sim tc" style="left:830.5px;top:618.5px;width:36.0px;font-size:21px;padding-left:12px">秒</span>
<div style="left:866.5px;top:617px;width:10px;height:25px;background:#d6d7dc"></div>
<svg style="left:866.5px;top:615px" width="10" height="29"><path d="M1.7 12.7 H8.3 L5.0 16.5Z" fill="#000"/></svg>
<div class="vsep" style="left:880px;top:602px;height:54px"></div>
<div class="vsep" style="left:883px;top:602px;height:54px"></div>
<svg style="left:0;top:601px" width="923" height="82" viewBox="0 601 923 82"><g fill="none" stroke="#444" stroke-width="1.1"><path d="M93.5 640.5 L97.5 644.5 L101.5 640.5"/><path d="M182 640.5 L186 644.5 L190 640.5"/><path d="M613.5 612.5 L617.5 616.5 L621.5 612.5"/></g><g fill="#b8b8b8"><rect x="919" y="671" width="2" height="2"/><rect x="919" y="675" width="2" height="2"/><rect x="919" y="679" width="2" height="2"/><rect x="915" y="675" width="2" height="2"/><rect x="915" y="679" width="2" height="2"/><rect x="911" y="679" width="2" height="2"/></g></svg>
<span class="t" style="left:14px;top:666px;font-size:12px">已停止.</span>
<div class="vsep" style="left:9px;top:660px;height:23px;background:#d7d7d7"></div>
<div class="vsep" style="left:185px;top:660px;height:23px;background:#d7d7d7"></div>
<div class="vsep" style="left:744px;top:660px;height:23px;background:#d7d7d7"></div>
<div class="menu" style="left:0;top:47px;width:205px;height:254px"></div>
<div style="left:3px;top:174px;width:200px;height:20.5px;background:#91c9f7"></div>
<div class="sepl" style="left:31px;top:141px;width:171px"></div>
<div class="sepl" style="left:31px;top:170px;width:171px"></div>
<div class="sepl" style="left:31px;top:222px;width:171px"></div>
<div class="sepl" style="left:31px;top:273px;width:171px"></div>
<span class="t mi" style="left:35px;top:55px">新建(N)</span>
<span class="t mi" style="letter-spacing:.45px;left:145px;top:55px">Ctrl+N</span>
<span class="t mi" style="left:35px;top:77px">打开(O)...</span>
<span class="t mi" style="letter-spacing:.45px;left:145px;top:77px">Ctrl+O</span>
<span class="t mi" style="left:35px;top:99px">最近的文件(F)</span>
<span class="t mi" style="left:35px;top:121px">关闭(C)</span>
<span class="t mi" style="letter-spacing:.45px;left:145px;top:121px">Ctrl+W</span>
<span class="t mi" style="left:35px;top:150px">保存项目(S)</span>
<span class="t mi" style="left:35px;top:179px">导出(E)</span>
<span class="t mi" style="left:35px;top:201px">导入(I)</span>
<span class="t mi" style="left:35px;top:230px">页面设置(G)...</span>
<span class="t mi" style="left:35px;top:252px">打印(P)...</span>
<span class="t mi" style="left:35px;top:281px">退出(X)</span>
<span class="t mi" style="letter-spacing:.45px;left:145px;top:281px">Ctrl+Q</span>
<div class="menu" style="left:199px;top:171px;width:269px;height:181px"></div>
<span class="t mi" style="left:234px;top:179px">导出为 MP3</span>
<span class="t mi" style="left:234px;top:201px">导出为 WAV</span>
<span class="t mi" style="left:234px;top:223px">导出为 OGG</span>
<span class="t mi" style="left:234px;top:245px">导出音频(E)...</span>
<span class="t mi" style="letter-spacing:.45px;left:377px;top:245px">Ctrl+Shift+E</span>
<span class="t mi" style="left:234px;top:267px">导出选择的音频(R)...</span>
<span class="t mi dis" style="left:234px;top:289px">导出标签(L)...</span>
<span class="t mi" style="left:234px;top:311px">导出多个文件(M)...</span>
<span class="t mi" style="letter-spacing:.45px;left:377px;top:311px">Ctrl+Shift+L</span>
<span class="t mi dis" style="left:234px;top:333px">导出 MIDI...</span>
<svg style="left:0;top:0" width="923" height="683" viewBox="0 0 923 683"><path d="M187.5 100 L191.5 104 L187.5 108M187.5 151 L191.5 155 L187.5 159M187.5 180 L191.5 184 L187.5 188M187.5 202 L191.5 206 L187.5 210" fill="none" stroke="#333" stroke-width="1.1"/><rect x="15.2" y="166.2" width="313" height="34" fill="none" stroke="#f43c3c" stroke-width="2.6"/><path d="M356.6 203.4 L380 196 L378.6 202.4 L499.9 232.3 L377 211.2 L375.5 217.4Z" fill="#f53a3a"/></svg>
</div>
</body>
</html>
